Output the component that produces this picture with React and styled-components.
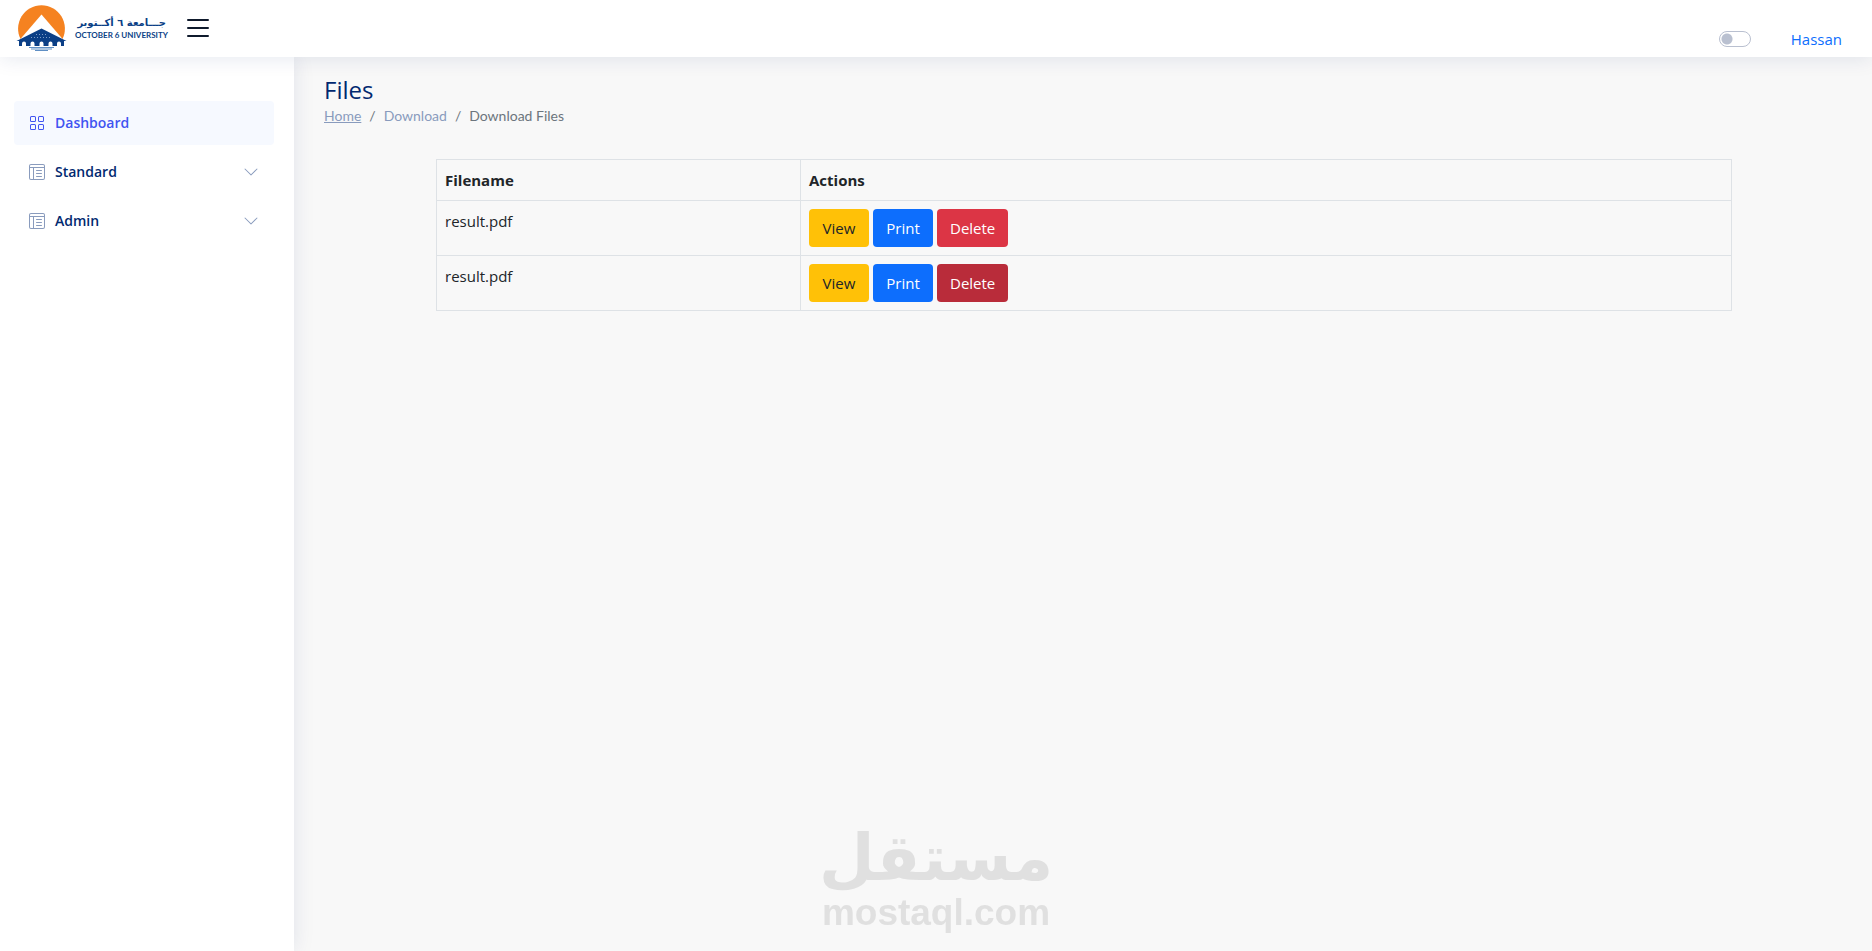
import { useState } from 'react';
import styled, { createGlobalStyle } from 'styled-components';
import { BsChevronDown, BsGrid, BsLayoutTextWindowReverse, BsList } from 'react-icons/bs';

const files = [
  { id: 1, name: 'result.pdf' },
  { id: 2, name: 'result.pdf', pressed: true },
]

const GlobalStyle = createGlobalStyle`
  * {
    box-sizing: border-box;
  }
  body {
    margin: 0;
    background: #f8f8f8;
    color: #212529;
    font-family: "Open Sans", "Noto Sans", sans-serif;
    font-size: 15px;
    line-height: 24px;
  }
`;

const Page = styled.div`
  min-height: 100vh;
  display: flex;
  flex-direction: column;
`;

const Header = styled.header`
  position: relative;
  z-index: 2;
  height: 57px;
  padding: 0 30px 2px 16px;
  display: flex;
  align-items: center;
  background: #fff;
  box-shadow: 0 2px 20px rgba(1, 41, 112, 0.1);
`;

const Brand = styled.a`
  display: flex;
  align-items: center;
  gap: 8px;
  color: #0b3f86;
  text-decoration: none;
`;

const BrandText = styled.span`
  width: 91px;
  display: flex;
  flex-direction: column;
  font-weight: bold;
  white-space: nowrap;
`;

const BrandArabic = styled.span`
  font-family: "DejaVu Sans", sans-serif;
  font-size: 10px;
  line-height: 14px;
`;

const BrandLatin = styled.span`
  font-family: "Lato", sans-serif;
  font-size: 8px;
  line-height: 10px;
`;

const MenuButton = styled.button`
  margin-left: 16px;
  padding: 0;
  display: flex;
  border: 0;
  background: none;
  color: #0f1a2c;
  font-size: 32px;
`;

const HeaderRight = styled.div`
  margin-left: auto;
  padding-top: 22px;
  display: flex;
  align-items: center;
  gap: 40px;
`;

const Switch = styled.input`
  appearance: none;
  width: 32px;
  height: 16px;
  margin: 0;
  border: 1px solid #b9c0d0;
  border-radius: 8px;
  background: radial-gradient(circle at 7px 7px, #b9c0d0 5px, transparent 6px) #fff;

  &:checked {
    border-color: #0d6efd;
    background: radial-gradient(circle at 23px 7px, #fff 5px, transparent 6px) #0d6efd;
  }
`;

const UserLink = styled.a`
  color: #0d6efd;
  text-decoration: none;
`;

const Body = styled.div`
  flex: 1;
  display: flex;
`;

const Sidebar = styled.nav`
  position: relative;
  z-index: 1;
  width: 294px;
  flex-shrink: 0;
  padding: 44px 20px 20px 14px;
  background: #fff;
  box-shadow: 0 0 20px rgba(1, 41, 112, 0.1);
`;

const NavList = styled.ul`
  margin: 0;
  padding: 0;
  display: flex;
  flex-direction: column;
  gap: 5px;
  list-style: none;
`;

const NavLink = styled.a`
  height: 44px;
  padding: 0 15px;
  display: flex;
  align-items: center;
  gap: 10px;
  border-radius: 4px;
  background: ${props => (props.$active ? '#f6f9ff' : 'transparent')};
  color: ${props => (props.$active ? '#4154f1' : '#012970')};
  font-size: 14px;
  font-weight: 600;
  text-decoration: none;

  svg {
    font-size: 16px;
    color: ${props => (props.$active ? '#4154f1' : '#899bbd')};
  }
  svg:nth-of-type(2) {
    margin-left: auto;
  }
`;

const Main = styled.main`
  flex: 1;
  padding: 18px 28px 20px 30px;
`;

const Title = styled.h1`
  margin: 0;
  color: #012970;
  font-size: 24px;
  font-weight: 500;
  line-height: 30px;
`;

const Breadcrumb = styled.ol`
  margin: 0;
  padding: 0;
  display: flex;
  list-style: none;
  color: #6c757d;
  font-family: "Lato", sans-serif;
  font-size: 14px;
  line-height: 21px;

  li + li::before {
    content: "/";
    padding: 0 8px;
  }
`;

const Crumb = styled.a`
  color: #899bbd;
  text-decoration: ${props => (props.$underline ? 'underline' : 'none')};
`;

const FileTable = styled.table`
  width: 100%;
  max-width: 1296px;
  margin: 33px auto 0;
  border-collapse: collapse;

  th, td {
    padding: 8px;
    border: 1px solid #dee2e6;
    text-align: left;
    vertical-align: top;
  }
  th:first-child {
    width: 364px;
  }
`;

const Actions = styled.div`
  display: flex;
  gap: 4px;
`;

const colors = {
  view: '#ffc107',
  print: '#0d6efd',
  delete: '#dc3545',
  deletePressed: '#b92c3a',
}

const Button = styled.button`
  min-width: 60px;
  height: 38px;
  padding: 0 13px;
  border: 0;
  border-radius: 4px;
  background: ${props => colors[props.$kind]};
  color: ${props => (props.$kind === 'view' ? '#212529' : '#fff')};
  font: inherit;
`;

const Watermark = styled.div`
  position: fixed;
  z-index: 3;
  left: 0;
  right: 0;
  bottom: 18px;
  color: #e0e0e0;
  font-weight: bold;
  text-align: center;
  pointer-events: none;
`;

const WatermarkArabic = styled.div`
  font-family: "DejaVu Sans", sans-serif;
  font-size: 64px;
  line-height: 70px;
`;

const WatermarkLatin = styled.div`
  font-family: "Liberation Sans", sans-serif;
  font-size: 37px;
  line-height: 40px;
`;

function Logo() {
  return (
    <svg width="51" height="46" viewBox="0 0 51 46" aria-hidden="true">
      <path d="M4.500 34A23.400 23.400 0 1 1 46.500 34Z" fill="#f58220" />
      <path d="M25.500 9.500L47 34.500H4Z" fill="#fff" />
      <path d="M25.500 23.500L50.500 36H0.500Z" fill="#0b3f86" />
      <path d="M20 29.500h11M15 32.500h21" stroke="#7e9cc5" strokeDasharray="1 2" />
      <path d="M3 35h45v6H3Z" fill="#0b3f86" />
      <path d="M6 41v-2.500a1.500 1.500 0 0 1 4 0V41ZM14.500 41v-2.500a1.500 1.500 0 0 1 4 0V41ZM23.500 41v-2.500a1.500 1.500 0 0 1 4 0V41ZM32.500 41v-2.500a1.500 1.500 0 0 1 4 0V41ZM41 41v-2.500a1.500 1.500 0 0 1 4 0V41Z" fill="#fff" />
      <path d="M13 42.500h25M15 44h21M19 45.500h13" stroke="#5f8fc4" />
    </svg>
  )
}

function App() {
  const [dark, setDark] = useState(false)
  return (
    <Page>
      <GlobalStyle />
      <Header>
        <Brand href="#">
          <Logo />
          <BrandText>
            <BrandArabic lang="ar" dir="rtl">جـــامعة ٦ أكــتوبر</BrandArabic>
            <BrandLatin>OCTOBER 6 UNIVERSITY</BrandLatin>
          </BrandText>
        </Brand>
        <MenuButton aria-label="Toggle sidebar"><BsList /></MenuButton>
        <HeaderRight>
          <Switch
            type="checkbox"
            role="switch"
            aria-label="Dark mode"
            checked={dark}
            onChange={() => setDark(!dark)}
          />
          <UserLink href="#">Hassan</UserLink>
        </HeaderRight>
      </Header>
      <Body>
        <Sidebar>
          <NavList>
            <li><NavLink href="#" $active><BsGrid />Dashboard</NavLink></li>
            <li><NavLink href="#"><BsLayoutTextWindowReverse />Standard<BsChevronDown /></NavLink></li>
            <li><NavLink href="#"><BsLayoutTextWindowReverse />Admin<BsChevronDown /></NavLink></li>
          </NavList>
        </Sidebar>
        <Main>
          <Title>Files</Title>
          <Breadcrumb>
            <li><Crumb href="#" $underline>Home</Crumb></li>
            <li><Crumb href="#">Download</Crumb></li>
            <li>Download Files</li>
          </Breadcrumb>
          <FileTable>
            <thead>
              <tr>
                <th>Filename</th>
                <th>Actions</th>
              </tr>
            </thead>
            <tbody>
              {files.map(file => (
                <tr key={file.id}>
                  <td>{file.name}</td>
                  <td>
                    <Actions>
                      <Button $kind="view">View</Button>
                      <Button $kind="print">Print</Button>
                      <Button $kind={file.pressed ? 'deletePressed' : 'delete'}>Delete</Button>
                    </Actions>
                  </td>
                </tr>
              ))}
            </tbody>
          </FileTable>
        </Main>
      </Body>
      <Watermark>
        <WatermarkArabic lang="ar" dir="rtl">مستقل</WatermarkArabic>
        <WatermarkLatin>mostaql.com</WatermarkLatin>
      </Watermark>
    </Page>
  );
}

export default App;
